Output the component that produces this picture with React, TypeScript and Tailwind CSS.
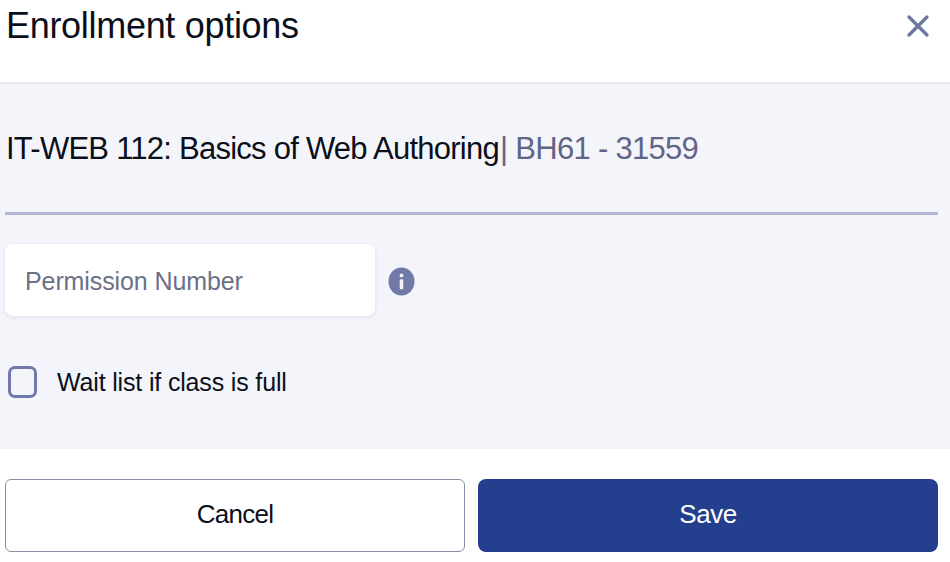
import { X } from "lucide-react";

export default function App() {
  return (
    <div className="flex h-[562px] w-[950px] flex-col overflow-hidden bg-white font-['Liberation_Sans',Arial,sans-serif]">
      <div className="flex h-[84px] shrink-0 justify-between border-b-2 border-[#e6e7ee] pl-[6px] pr-[14px] pt-[4px]">
        <h1 className="text-[36px] leading-[44px] tracking-[-0.3px] text-[#0b0f1a]">Enrollment options</h1>
        <button className="mt-[4px] h-[36px] text-[#6d769f]">
          <X size={36} strokeWidth={2.2} />
        </button>
      </div>

      <div className="h-[365px] shrink-0 bg-[#f4f5fa] pl-[5px] pr-[12px]">
        <div className="h-[131px] border-b-[3px] border-[#b3b6d4] pl-[1px] pt-[45px] text-[31px] leading-[40px] tracking-[-0.75px] text-[#0b0f1a]">
          IT-WEB 112: Basics of Web Authoring
          <span className="ml-[1px] tracking-[-0.7px] text-[#5f6586]">| BH61 - 31559</span>
        </div>

        <div className="mt-[29px] flex items-center gap-[13px]">
          <input
            placeholder="Permission Number"
            className="h-[72px] w-[370px] rounded-[8px] bg-white pl-[20px] pt-[2px] text-[25px] tracking-[-0.1px] text-[#5f6586] shadow-[0_1px_4px_rgba(90,95,140,0.15)] outline-none placeholder:text-[#6b7088]"
          />
          <svg width="27" height="29" viewBox="0 0 28 30" className="mt-[2px]">
            <ellipse cx="14" cy="15" rx="13.5" ry="14.5" fill="#7079a8" />
            <circle cx="14" cy="8.7" r="2" fill="#f4f5fa" />
            <rect x="12.2" y="12.6" width="3.6" height="10.4" rx="1" fill="#f4f5fa" />
          </svg>
        </div>

        <label className="mt-[50px] flex items-center gap-[20px] pl-[3px] text-[25px] leading-[32px] tracking-[-0.16px] text-[#0b0f1a]">
          <span className="h-[32px] w-[29px] rounded-[7px] border-[3px] border-[#7079a8]" />
          Wait list if class is full
        </label>
      </div>

      <div className="flex gap-[13px] pl-[5px] pr-[12px] pt-[30px]">
        <button className="h-[73px] w-[460px] rounded-[6px] border border-[#8b8fa3] bg-white pb-[2px] text-[26px] tracking-[-0.7px] text-[#0b0f1a]">
          Cancel
        </button>
        <button className="h-[73px] w-[460px] rounded-[8px] bg-[#233f8d] pb-[2px] text-[26px] tracking-[-0.5px] text-white">
          Save
        </button>
      </div>
    </div>
  );
}
